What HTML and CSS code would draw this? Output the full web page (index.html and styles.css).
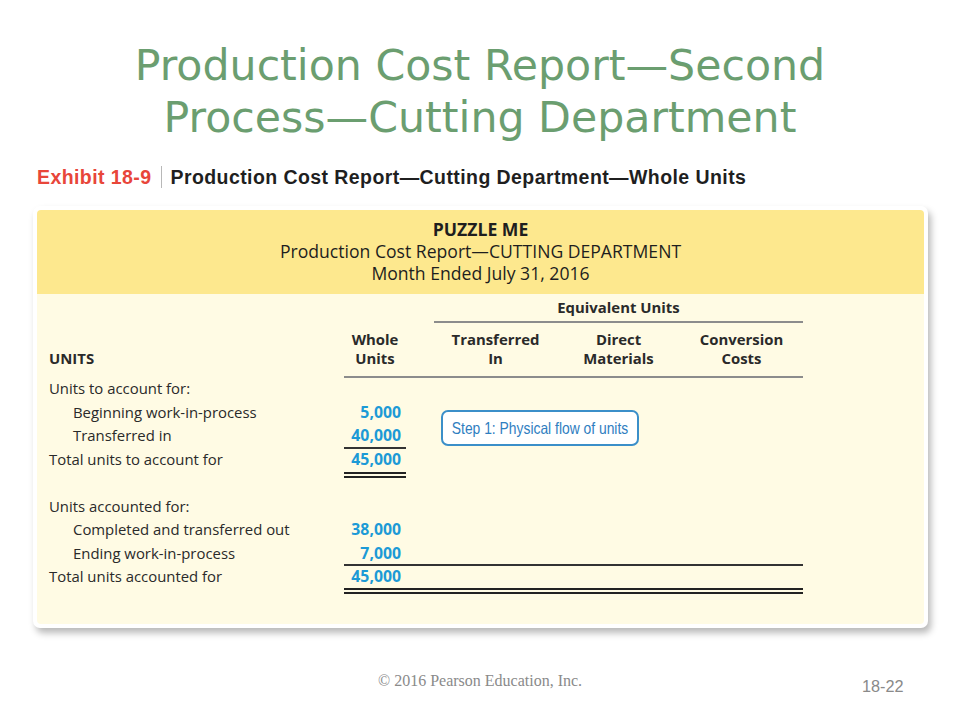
FILE: index.html
```html
<!DOCTYPE html>
<html>
<head>
<meta charset="utf-8">
<link rel="stylesheet" href="styles.css">
</head>
<body>
<div class="slide">
  <h1 class="title">Production Cost Report—Second<br>Process—Cutting Department</h1>
  <div class="exhibit">
    <span class="ex-num">Exhibit 18-9</span>
    <span class="ex-sep"></span>
    <span class="ex-title">Production Cost Report—Cutting Department—Whole Units</span>
  </div>
  <div class="card">
    <div class="card-head">
      <div class="co">PUZZLE ME</div>
      <div>Production Cost Report—CUTTING DEPARTMENT</div>
      <div>Month Ended July 31, 2016</div>
    </div>
    <div class="card-body">
      <div class="row row-eq">
        <div class="c-label"></div>
        <div class="c-whole"></div>
        <div class="c-gap"></div>
        <div class="eq-head">Equivalent Units</div>
      </div>
      <div class="row row-hd">
        <div class="c-label units-hd">UNITS</div>
        <div class="c-whole hd rule">Whole<br>Units</div>
        <div class="c-gap rule"></div>
        <div class="c-eq hd rule">Transferred<br>In</div>
        <div class="c-eq hd rule">Direct<br>Materials</div>
        <div class="c-eq hd rule">Conversion<br>Costs</div>
      </div>

      <div class="row data">
        <div class="c-label">Units to account for:</div>
        <div class="c-whole"></div>
      </div>
      <div class="row data">
        <div class="c-label indent">Beginning work-in-process</div>
        <div class="c-whole num">5,000</div>
      </div>
      <div class="row data">
        <div class="c-label indent">Transferred in</div>
        <div class="c-whole num single">40,000</div>
      </div>
      <div class="row data">
        <div class="c-label">Total units to account for</div>
        <div class="c-whole num">45,000</div>
      </div>
      <div class="row data">
        <div class="c-label"></div>
        <div class="c-whole double-top"></div>
      </div>
      <div class="row data">
        <div class="c-label">Units accounted for:</div>
      </div>
      <div class="row data">
        <div class="c-label indent">Completed and transferred out</div>
        <div class="c-whole num">38,000</div>
      </div>
      <div class="row data">
        <div class="c-label indent">Ending work-in-process</div>
        <div class="c-whole num single">7,000</div>
        <div class="c-gap single"></div>
        <div class="c-eq single"></div>
        <div class="c-eq single"></div>
        <div class="c-eq single"></div>
      </div>
      <div class="row data last">
        <div class="c-label">Total units accounted for</div>
        <div class="c-whole num double">45,000</div>
        <div class="c-gap double"></div>
        <div class="c-eq double"></div>
        <div class="c-eq double"></div>
        <div class="c-eq double"></div>
      </div>

      <div class="callout"><span class="callout-text">Step 1: Physical flow of units</span></div>
    </div>
  </div>
  <div class="footer">
    <span class="copy">© 2016 Pearson Education, Inc.</span>
    <span class="page">18-22</span>
  </div>
</div>
</body>
</html>
```

FILE: styles.css
```css
html, body {
  margin: 0;
  padding: 0;
  background: #ffffff;
}

.slide {
  width: 960px;
  height: 720px;
  position: relative;
  overflow: hidden;
}

.title {
  margin: 0;
  padding-top: 39px;
  text-align: center;
  font-family: "DejaVu Sans", Verdana, sans-serif;
  font-weight: normal;
  font-size: 42.7px;
  line-height: 52px;
  color: #6b9e70;
}

.exhibit {
  margin-top: 22px;
  margin-left: 37px;
  height: 24px;
  display: flex;
  align-items: center;
  font-family: "Liberation Sans", Arial, sans-serif;
  font-weight: bold;
  font-size: 19.5px;
  letter-spacing: 0.42px;
}

.ex-num {
  color: #e8463a;
}

.ex-sep {
  width: 1px;
  height: 22px;
  background: #b8b8b8;
  margin: 0 9px 0 9px;
}

.ex-title {
  color: #1f1f1f;
}

.card {
  margin-top: 17px;
  margin-left: 33px;
  width: 887px;
  padding: 4px;
  background: #ffffff;
  border-radius: 7px;
  box-shadow: 3px 5px 7px rgba(0, 0, 0, 0.28);
}

.card-head {
  height: 84px;
  box-sizing: border-box;
  padding-top: 8px;
  background: #fde88e;
  border-radius: 4px 4px 0 0;
  text-align: center;
  font-family: "Open Sans", "Noto Sans", sans-serif;
  font-size: 17.6px;
  line-height: 22px;
  color: #1e1e1e;
}

.card-head .co {
  font-weight: bold;
}

.card-body {
  position: relative;
  background: #fffbe4;
  border-radius: 0 0 4px 4px;
  padding: 0 0 30px 12px;
  font-family: "Open Sans", "Noto Sans", sans-serif;
  font-size: 14.9px;
  color: #2a2a2a;
}

.row {
  display: grid;
  grid-template-columns: 295px 62px 28px 123px 123px 123px;
}

.row-eq {
  height: 29px;
}

.eq-head {
  grid-column: 4 / 7;
  box-sizing: border-box;
  height: 29px;
  padding-top: 3px;
  line-height: 20px;
  text-align: center;
  font-weight: bold;
  border-bottom: 2px solid #8c8c8c;
}

.row-hd > div {
  box-sizing: border-box;
  height: 55px;
  padding-top: 7px;
  line-height: 19px;
}

.hd {
  text-align: center;
  font-weight: bold;
}

.units-hd {
  font-weight: bold;
  padding-top: 26px !important;
}

.rule {
  border-bottom: 2px solid #8c8c8c;
}

.data > div {
  box-sizing: border-box;
  height: 23.5px;
  line-height: 20.5px;
  white-space: nowrap;
}

.data.last > div {
  height: 28px;
}

.indent {
  padding-left: 24px;
}

.num {
  text-align: right;
  padding-right: 5px;
  font-weight: bold;
  font-size: 15.8px;
  color: #1c9ad6;
}

.single {
  border-bottom: 2px solid #333333;
}

.double {
  border-bottom: 6px double #222222;
}

.double-top {
  border-top: 6px double #222222;
}

.callout {
  position: absolute;
  left: 404px;
  top: 116px;
  width: 198px;
  height: 36px;
  box-sizing: border-box;
  border: 2px solid #3b8fc9;
  border-radius: 7px;
  background: #ffffff;
  display: flex;
  align-items: center;
  justify-content: center;
  font-family: "Liberation Sans", Arial, sans-serif;
  font-size: 16.5px;
  color: #2f7ebf;
}

.callout-text {
  display: inline-block;
  white-space: nowrap;
  transform: scaleX(0.84);
}

.footer {
  position: absolute;
  left: 0;
  right: 0;
  top: 672px;
  height: 24px;
}

.copy {
  position: absolute;
  left: 378px;
  top: 0;
  font-family: "Liberation Serif", "Times New Roman", serif;
  font-size: 16px;
  color: #8a8a8a;
}

.page {
  position: absolute;
  left: 862px;
  top: 5px;
  font-family: "Liberation Sans", Arial, sans-serif;
  font-size: 16.3px;
  color: #8a8a8a;
}
```
